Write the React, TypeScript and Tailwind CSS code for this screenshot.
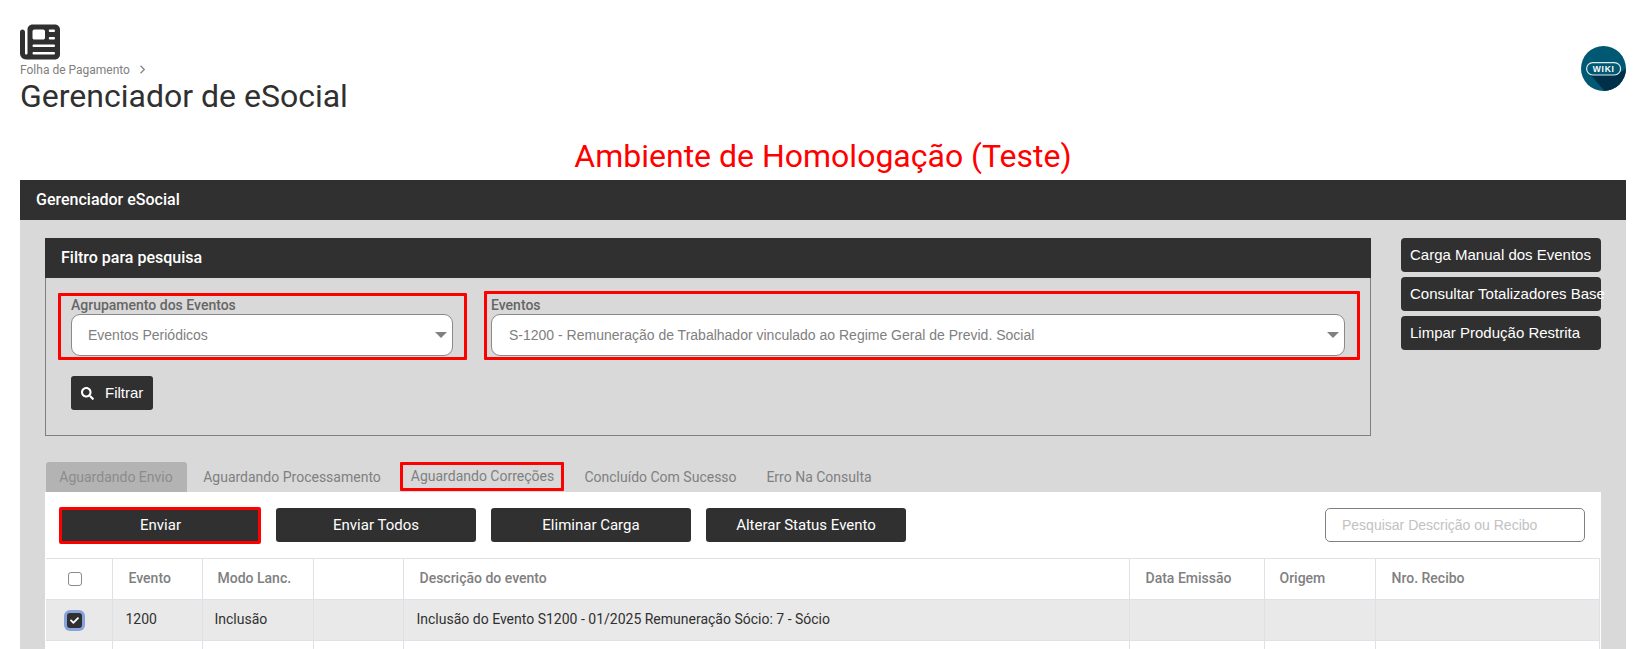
import React from "react";
import { FaSearch, FaCheck } from "react-icons/fa";
import { FaNewspaper } from "react-icons/fa6";

const ROBOTO = "font-['Roboto',sans-serif]";
const ARIAL = "font-['Liberation_Sans',sans-serif]";

function Select({ text, className }: { text: string; className: string }) {
  return (
    <div className={`h-[42px] bg-white border border-[#8a8a8a] rounded-[9px] flex items-center justify-between pr-[3px] ${className}`}>
      <span className={`${ARIAL} text-[14px] text-[#808080] whitespace-nowrap`}>{text}</span>
      <span className="w-0 h-0 border-l-[6px] border-r-[6px] border-t-[6px] border-l-transparent border-r-transparent border-t-[#808080] mr-[2px]" />
    </div>
  );
}

function DarkButton({ label, red }: { label: string; red?: boolean }) {
  return (
    <button
      className={`${ROBOTO} bg-[#303030] text-white text-[15px] flex items-center justify-center ${
        red ? "w-[202px] h-[37px] border-[3px] border-[#ff0000] rounded-[2px] pl-[1px]" : "w-[200px] h-[34px] rounded-[3px]"
      }`}
    >
      {label}
    </button>
  );
}

function SideButton({ label }: { label: string }) {
  return (
    <button className={`${ARIAL} w-[200px] h-[34px] bg-[#303030] text-white text-[15px] text-left pl-[9px] rounded-[4px] whitespace-nowrap`}>
      {label}
    </button>
  );
}

function WikiLogo() {
  return (
    <svg width="45" height="45" viewBox="0 0 45 45">
      <defs>
        <clipPath id="wc">
          <circle cx="22.5" cy="22.5" r="22.5" />
        </clipPath>
      </defs>
      <circle cx="22.5" cy="22.5" r="22.5" fill="#005872" />
      <g clipPath="url(#wc)">
        <path d="M8 27 L38 27 L50 20 L50 50 L28 50 Z" fill="#003049" />
      </g>
      <rect x="5.6" y="16.6" width="34" height="12.4" rx="6.2" fill="#005872" stroke="#dfe8ec" strokeWidth="1.2" />
      <text x="22.7" y="26.2" textAnchor="middle" fill="#ffffff" fontSize="8.5" fontWeight="700" letterSpacing="0.7" fontFamily="Liberation Sans, sans-serif">
        WIKI
      </text>
    </svg>
  );
}

const columns = [
  { id: "check", width: "w-[66px]" },
  { id: "evento", width: "w-[90px]" },
  { id: "modo", width: "w-[111px]" },
  { id: "blank", width: "w-[90px]" },
  { id: "descricao", width: "w-[726px]" },
  { id: "data", width: "w-[135px]" },
  { id: "origem", width: "w-[111px]" },
  { id: "recibo", width: "w-[224px]" },
];

function HeaderCell({ children, className }: { children?: React.ReactNode; className: string }) {
  return (
    <th className={`border border-[#dee2e6] text-left font-medium text-[14px] text-[#808080] align-middle pb-[2px] ${className}`}>{children}</th>
  );
}

function BodyCell({ children, className = "" }: { children?: React.ReactNode; className?: string }) {
  return <td className={`border border-[#dee2e6] text-[14px] text-[#303030] align-middle pb-[2px] ${className}`}>{children}</td>;
}

export default function App() {
  return (
    <div className={`${ROBOTO} h-[649px] overflow-hidden bg-white pl-5 pr-[22px]`}>
      <header className="flex justify-between h-[135px] pt-[22px]">
        <div>
          <FaNewspaper className="text-[#303030] w-[40px] h-[40px]" />
          <div className="flex items-center h-[15px] text-[12px] text-[#808080] leading-none">
            Folha de Pagamento
            <svg className="ml-[9px]" width="7" height="9" viewBox="0 0 7 9" fill="none" stroke="#808080" strokeWidth="1.2">
              <path d="M1.5 0.8 L5.3 4.5 L1.5 8.2" />
            </svg>
          </div>
          <h1 className="text-[32px] leading-[38px] text-[#303030]">Gerenciador de eSocial</h1>
        </div>
        <div className="mt-[24px]">
          <WikiLogo />
        </div>
      </header>

      <div className="h-[45px] text-center text-[32px] leading-[42px] text-[#ff0000]">Ambiente de Homologação (Teste)</div>

      <div className="h-[40px] bg-[#303030] text-white text-[16px] font-medium flex items-center pl-[16px]">Gerenciador eSocial</div>

      <main className="bg-[#d9d9d9] h-[429px] pl-[25px] pr-[25px] pt-[18px]">
        <div className="flex">
          <section className="w-[1326px] h-[198px] flex flex-col">
            <div className="h-[40px] shrink-0 bg-[#303030] text-white text-[16px] font-medium flex items-center pl-[16px]">Filtro para pesquisa</div>
            <div className="flex-1 border border-t-0 border-[#808080] pl-[12px] pt-[13px]">
              <div className="flex items-end gap-[17px]">
                <div className="w-[409px] h-[67px] border-[3px] border-[#ff0000] rounded-[1px] pl-[10px] pr-[11px] flex flex-col justify-end pb-[1px]">
                  <label className="text-[14px] font-medium text-[#666666] leading-[17px]">Agrupamento dos Eventos</label>
                  <Select text="Eventos Periódicos" className="pl-[16px]" />
                </div>
                <div className="w-[876px] h-[69px] border-[3px] border-[#ff0000] rounded-[1px] pl-[4px] pr-[12px] flex flex-col justify-end pb-[1px]">
                  <label className="text-[14px] font-medium text-[#666666] leading-[17px]">Eventos</label>
                  <Select text="S-1200 - Remuneração de Trabalhador vinculado ao Regime Geral de Previd. Social" className="pl-[17px]" />
                </div>
              </div>
              <button className={`${ARIAL} mt-[16px] ml-[13px] w-[82px] h-[34px] bg-[#303030] text-white text-[15px] rounded-[3px] flex items-center pl-[10px] gap-[11px]`}>
                <FaSearch className="w-[13px] h-[13px]" />
                Filtrar
              </button>
            </div>
          </section>
          <aside className="ml-[30px] flex flex-col gap-[5px]">
            <SideButton label="Carga Manual dos Eventos" />
            <SideButton label="Consultar Totalizadores Base" />
            <SideButton label="Limpar Produção Restrita" />
          </aside>
        </div>

        <nav className="mt-[26px] flex items-end h-[30px] pl-[1px] text-[14px] text-[#808080]">
          <div className="w-[141px] h-[30px] bg-[#b3b3b3] text-[#8c8c8c] rounded-t-[3px] flex items-center justify-center pr-[1px]">Aguardando Envio</div>
          <div className="w-[213px] h-[30px] flex items-center justify-center pr-[3px]">Aguardando Processamento</div>
          <div className="w-[164px] h-[29px] mb-[1px] border-[3px] border-[#ff0000] rounded-[1px] flex items-center justify-center pl-[1px]">Aguardando Correções</div>
          <div className="w-[191px] h-[30px] flex items-center justify-center pl-[2px]">Concluído Com Sucesso</div>
          <div className="w-[128px] h-[30px] flex items-center justify-center">Erro Na Consulta</div>
        </nav>

        <div className="bg-white h-[170px]">
          <div className="h-[66px] flex items-center pl-[14px] pr-[16px]">
            <div className="flex items-center gap-[15px]">
              <DarkButton label="Enviar" red />
              <DarkButton label="Enviar Todos" />
              <DarkButton label="Eliminar Carga" />
              <DarkButton label="Alterar Status Evento" />
            </div>
            <input
              readOnly
              placeholder="Pesquisar Descrição ou Recibo"
              className={`${ARIAL} ml-auto w-[260px] h-[34px] border border-[#808080] rounded-[5px] pl-[16px] text-[14px] placeholder:text-[#c2c2c2] outline-none`}
            />
          </div>
          <table className="table-fixed border-collapse w-[1553px] ml-[1px]">
            <colgroup>
              {columns.map((c) => (
                <col key={c.id} className={c.width} />
              ))}
            </colgroup>
            <thead>
              <tr className="h-[41px]">
                <HeaderCell className="pl-[22px] border-l-0">
                  <span className="block w-[14px] h-[14px] border border-[#8a8a8a] rounded-[3px] bg-white mt-[2px]" />
                </HeaderCell>
                <HeaderCell className="pl-[16px]">Evento</HeaderCell>
                <HeaderCell className="pl-[15px]">Modo Lanc.</HeaderCell>
                <HeaderCell className="" />
                <HeaderCell className="pl-[16px]">Descrição do evento</HeaderCell>
                <HeaderCell className="pl-[16px]">Data Emissão</HeaderCell>
                <HeaderCell className="pl-[15px]">Origem</HeaderCell>
                <HeaderCell className="pl-[16px]">Nro. Recibo</HeaderCell>
              </tr>
            </thead>
            <tbody>
              <tr className="h-[41px] bg-[#e9e9e9]">
                <BodyCell className="pl-[21px] border-l-0">
                  <span className="flex items-center justify-center w-[15px] h-[15px] rounded-[3px] bg-[#303030] shadow-[0_0_0_3px_#86a3dd] mt-[2px]">
                    <FaCheck className="w-[9px] h-[9px] text-white" />
                  </span>
                </BodyCell>
                <BodyCell className="pl-[13px]">1200</BodyCell>
                <BodyCell className="pl-[12px]">Inclusão</BodyCell>
                <BodyCell />
                <BodyCell className="pl-[13px]">Inclusão do Evento S1200 - 01/2025 Remuneração Sócio: 7 - Sócio</BodyCell>
                <BodyCell />
                <BodyCell />
                <BodyCell />
              </tr>
              <tr className="h-[42px] bg-white">
                <BodyCell className="border-l-0" />
                <BodyCell />
                <BodyCell />
                <BodyCell />
                <BodyCell />
                <BodyCell />
                <BodyCell />
                <BodyCell />
              </tr>
            </tbody>
          </table>
        </div>
      </main>
    </div>
  );
}
